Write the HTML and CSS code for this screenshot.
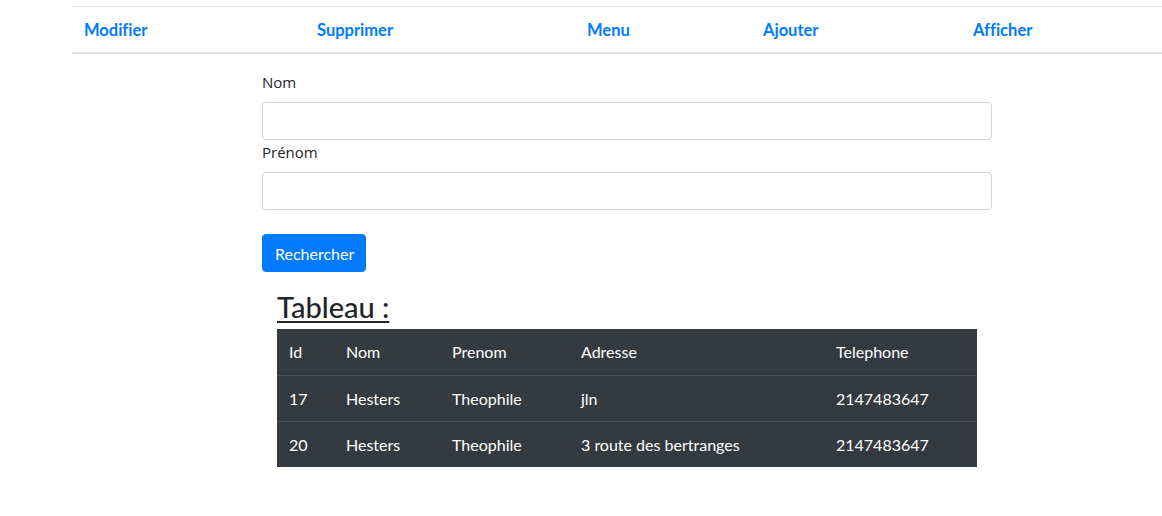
FILE: index.html
```html
<!DOCTYPE html>
<html lang="fr">
<head>
<meta charset="utf-8">
<title>Recherche</title>
<link rel="stylesheet" href="styles.css">
</head>
<body>
<nav class="topnav">
  <a class="navlink c1" href="#">Modifier</a>
  <a class="navlink c2" href="#">Supprimer</a>
  <a class="navlink c3" href="#">Menu</a>
  <a class="navlink c4" href="#">Ajouter</a>
  <a class="navlink c5" href="#">Afficher</a>
</nav>
<main class="content">
  <form class="search">
    <label class="lbl" for="nom">Nom</label>
    <input class="field" id="nom" type="text">
    <label class="lbl" for="prenom">Prénom</label>
    <input class="field" id="prenom" type="text">
    <button class="btn" type="button">Rechercher</button>
  </form>
  <section class="tablebox">
    <h2 class="title">Tableau :</h2>
    <table class="data">
      <thead>
        <tr><th class="w1">Id</th><th class="w2">Nom</th><th class="w3">Prenom</th><th class="w4">Adresse</th><th>Telephone</th></tr>
      </thead>
      <tbody>
        <tr><td>17</td><td>Hesters</td><td>Theophile</td><td>jln</td><td>2147483647</td></tr>
        <tr><td>20</td><td>Hesters</td><td>Theophile</td><td>3 route des bertranges</td><td>2147483647</td></tr>
      </tbody>
    </table>
  </section>
</main>
</body>
</html>
```
FILE: styles.css
```css
html, body { margin: 0; padding: 0; background: #fff; }
body {
  font-family: Lato, "Liberation Sans", sans-serif;
  font-size: 16px;
  color: #212529;
  font-variant-ligatures: none;
}
.topnav {
  margin: 6px 0 0 72px;
  height: 45px;
  box-sizing: content-box;
  padding-top: 1px;
  height: 44px;
  border-top: 1px solid #dee2e6;
  border-bottom: 2px solid #dee2e6;
  display: grid;
  grid-template-columns: 233px 270px 176px 210px 1fr;
  align-items: center;
}
.navlink {
  color: #007bff;
  font-weight: bold;
  text-decoration: none;
  padding-left: 12px;
  font-size: 16.5px;
}
.content { padding-left: 262px; }
.search {
  width: 730px;
  display: flex;
  flex-direction: column;
  align-items: flex-start;
  padding-top: 16px;
}
.lbl {
  font-family: "Open Sans", sans-serif;
  font-size: 15px;
  line-height: 24px;
  margin-bottom: 8px;
  color: #212529;
}
.field {
  box-sizing: border-box;
  width: 730px;
  height: 38px;
  border: 1px solid #ced4da;
  border-radius: 4px;
  margin: 0;
}
.btn {
  margin-top: 24px;
  height: 38px;
  padding: 0 12px;
  width: 104px;
  background: #007bff;
  border: 1px solid #007bff;
  border-radius: 4px;
  color: #fff;
  font-family: Lato, "Liberation Sans", sans-serif;
  font-size: 16px;
}
.tablebox { padding-left: 15px; padding-top: 16px; }
.title {
  margin: 0 0 4px 0;
  font-size: 29px;
  font-weight: 500;
  line-height: 37px;
  text-decoration: underline;
  text-underline-offset: 3px;
  text-decoration-thickness: 2px;
}
.data {
  width: 700px;
  border-collapse: collapse;
  background: #343a40;
  color: #fff;
}
.data th, .data td {
  text-align: left;
  font-weight: normal;
  padding: 0 12px;
  height: 46px;
  box-sizing: border-box;
  vertical-align: middle;
}
.data tbody td { border-top: 1px solid #454d55; }
.w1 { width: 57px; }
.w2 { width: 106px; }
.w3 { width: 129px; }
.w4 { width: 255px; }
```
